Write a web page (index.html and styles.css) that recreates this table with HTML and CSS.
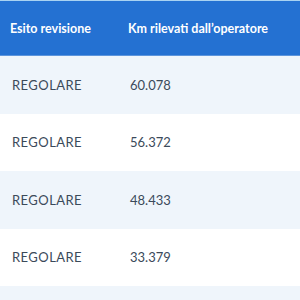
FILE: index.html
```html
<!DOCTYPE html>
<html lang="it"><head><meta charset="utf-8"><link rel="stylesheet" href="styles.css"></head>
<body>
<div class="table">
  <div class="row head">
    <div class="cell c1">Esito revisione</div>
    <div class="cell c2">Km rilevati dall’operatore</div>
  </div>
  <div class="row odd"><div class="cell c1">REGOLARE</div><div class="cell c2">60.078</div></div>
  <div class="row"><div class="cell c1">REGOLARE</div><div class="cell c2">56.372</div></div>
  <div class="row odd"><div class="cell c1">REGOLARE</div><div class="cell c2">48.433</div></div>
  <div class="row"><div class="cell c1">REGOLARE</div><div class="cell c2">33.379</div></div>
  <div class="row odd"><div class="cell c1"></div><div class="cell c2"></div></div>
</div>
</body></html>
```
FILE: styles.css
```css
html,body{margin:0;background:#fff;overflow:hidden}
.table{border-top:1px solid #a9d3f2;font-family:Lato,"Open Sans",sans-serif;}
.row{display:grid;grid-template-columns:117px 1fr;height:57.5px;align-items:center;color:#3b4a5a;font-size:13px}
.row.odd{background:#eff5fb}
.row .c1{letter-spacing:0.45px}
.head{height:54px;background:#2471d2;color:#fff;font-weight:700;font-size:12.5px;border-bottom:1px solid #5d95dc}
.head .c1{letter-spacing:0}
.c1{padding-left:12px}
.c2{padding-left:13px}
.head .c1{padding-left:10px}
.head .c2{padding-left:11px}
```
